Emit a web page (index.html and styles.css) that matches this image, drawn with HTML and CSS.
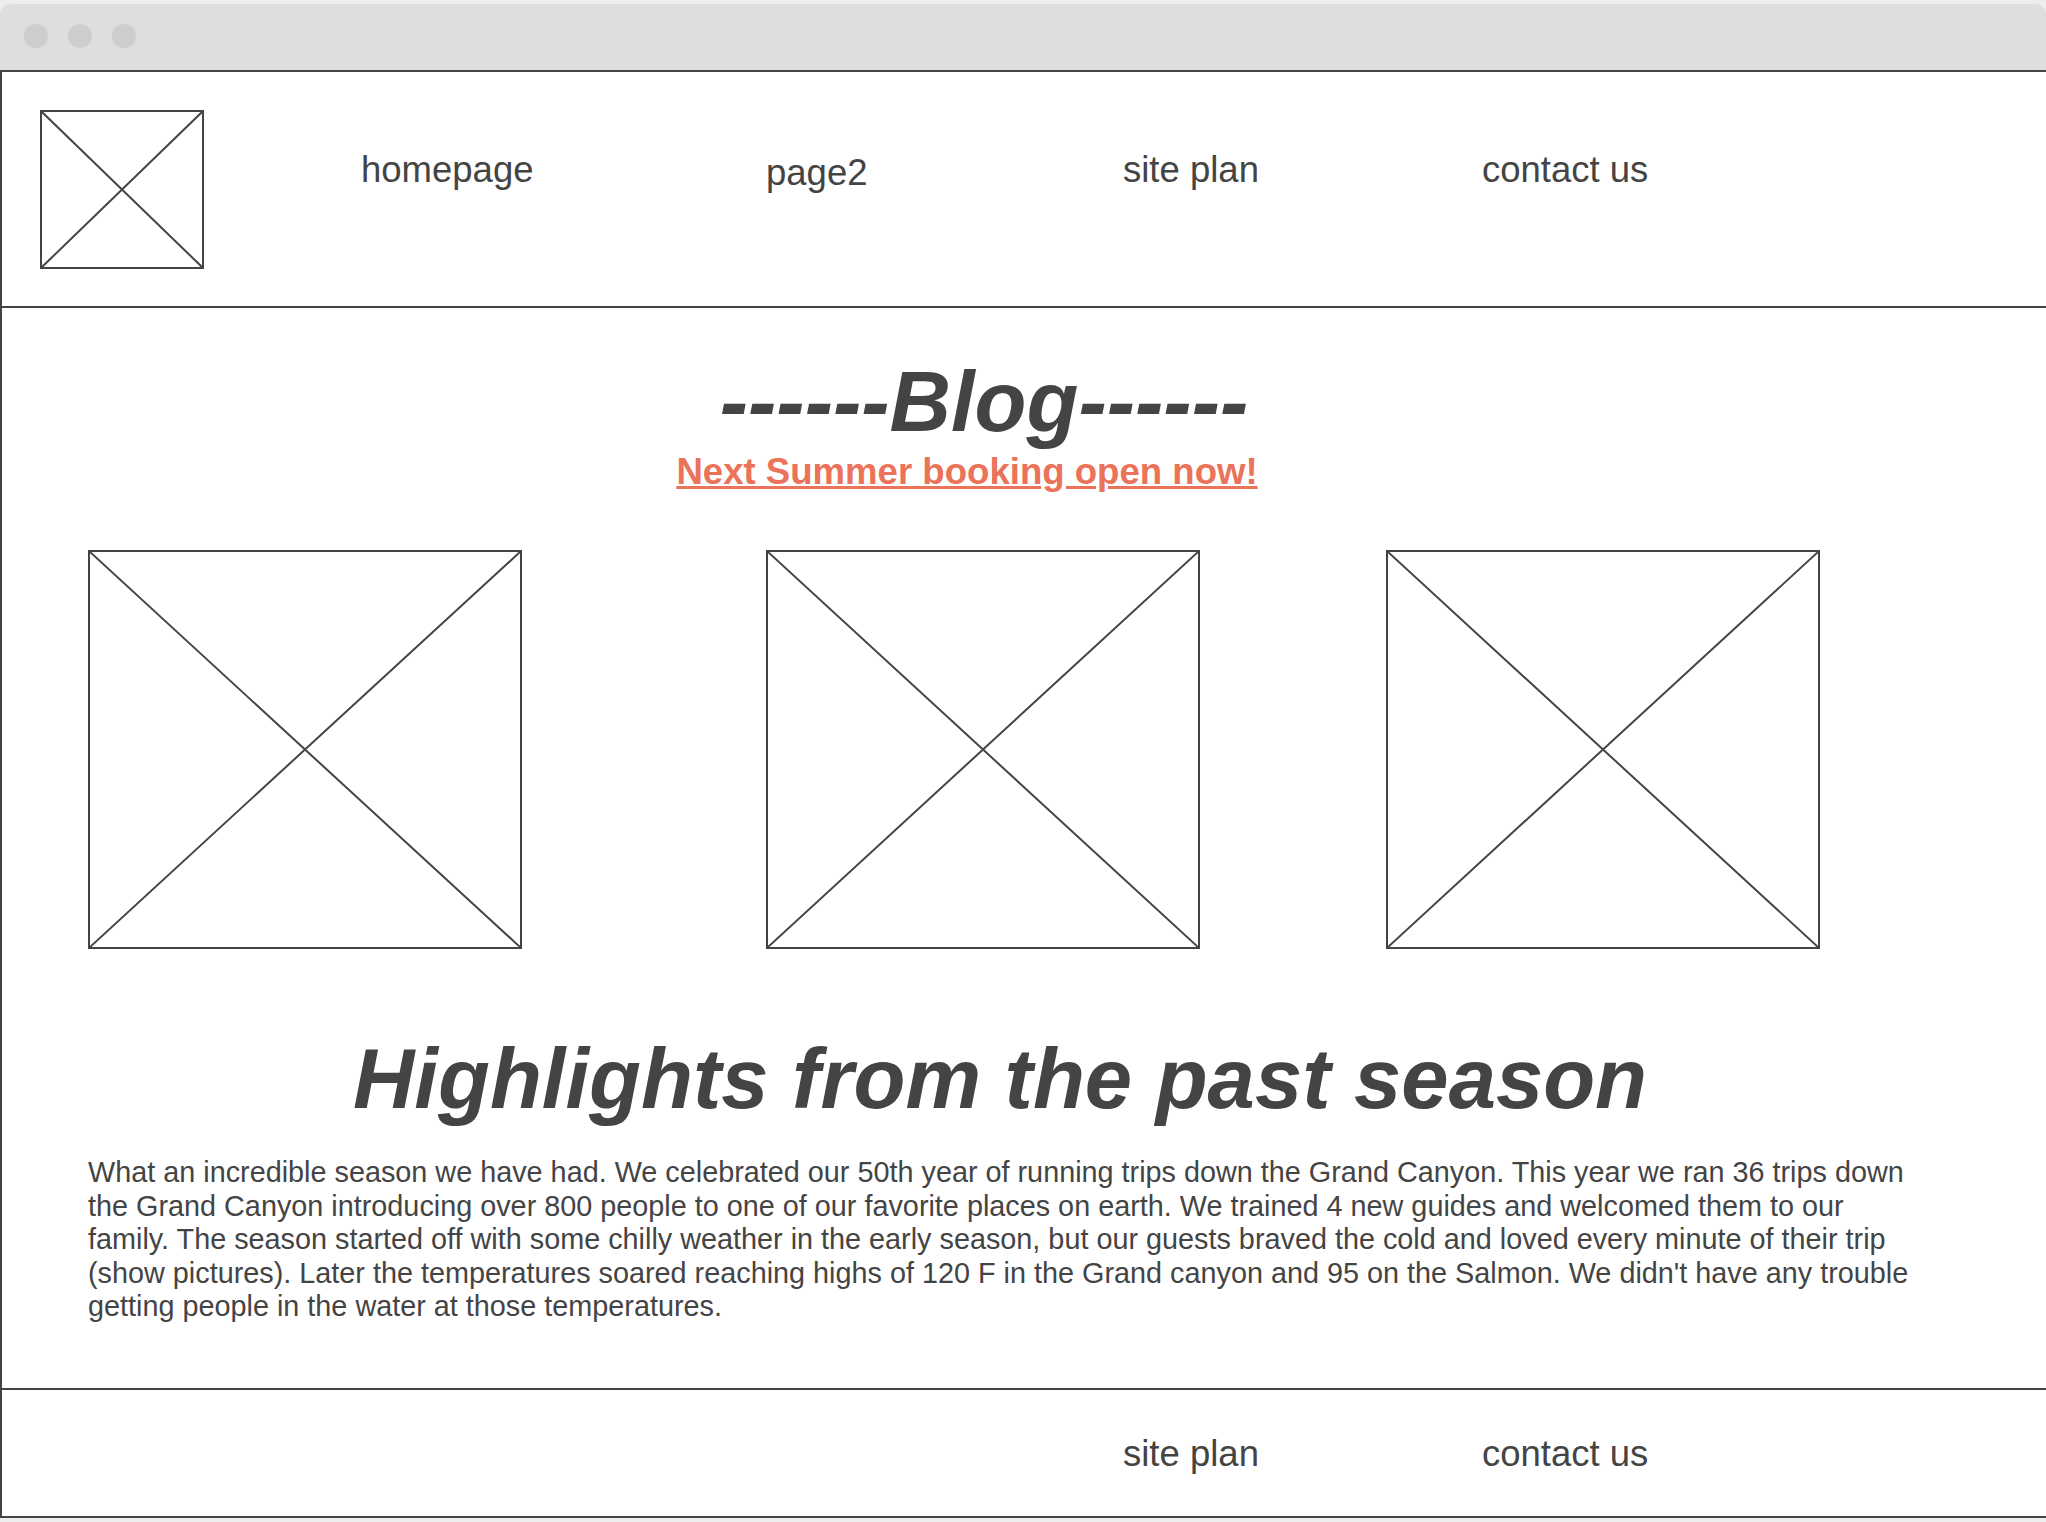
FILE: index.html
```html
<!DOCTYPE html>
<html lang="en">
<head>
    <meta charset="UTF-8">
    <meta name="viewport" content="width=device-width, initial-scale=1.0">
    <title>Blog</title>
    <link rel="stylesheet" href="styles.css">
</head>
<body>
    <div class="window">
        <!-- Browser chrome -->
        <div class="titlebar">
            <span class="dot"></span>
            <span class="dot"></span>
            <span class="dot"></span>
        </div>

        <div class="page">
            <header class="site-header">
                <div class="placeholder logo">
                    <svg viewBox="0 0 100 100" preserveAspectRatio="none">
                        <line x1="0" y1="0" x2="100" y2="100"></line>
                        <line x1="100" y1="0" x2="0" y2="100"></line>
                    </svg>
                </div>
                <nav class="nav">
                    <a class="nav-link" href="#">homepage</a>
                    <a class="nav-link low" href="#">page2</a>
                    <a class="nav-link" href="#">site plan</a>
                    <a class="nav-link" href="#">contact us</a>
                </nav>
            </header>

            <main class="content">
                <h1 class="blog-title">------Blog------</h1>
                <p class="booking"><a href="#">Next Summer booking open now!</a></p>

                <div class="gallery">
                    <div class="placeholder photo">
                        <svg viewBox="0 0 100 100" preserveAspectRatio="none">
                            <line x1="0" y1="0" x2="100" y2="100"></line>
                            <line x1="100" y1="0" x2="0" y2="100"></line>
                        </svg>
                    </div>
                    <div class="placeholder photo">
                        <svg viewBox="0 0 100 100" preserveAspectRatio="none">
                            <line x1="0" y1="0" x2="100" y2="100"></line>
                            <line x1="100" y1="0" x2="0" y2="100"></line>
                        </svg>
                    </div>
                    <div class="placeholder photo">
                        <svg viewBox="0 0 100 100" preserveAspectRatio="none">
                            <line x1="0" y1="0" x2="100" y2="100"></line>
                            <line x1="100" y1="0" x2="0" y2="100"></line>
                        </svg>
                    </div>
                </div>

                <h2 class="highlights">Highlights from the past season</h2>
                <p class="story">What an incredible season we have had. We celebrated our 50th year of running trips down the Grand Canyon. This year we ran 36 trips down the Grand Canyon introducing over 800 people to one of our favorite places on earth. We trained 4 new guides and welcomed them to our family. The season started off with some chilly weather in the early season, but our guests braved the cold and loved every minute of their trip (show pictures). Later the temperatures soared reaching highs of 120 F in the Grand canyon and 95 on the Salmon. We didn't have any trouble getting people in the water at those temperatures.</p>
            </main>

            <footer class="site-footer">
                <a class="nav-link" href="#">site plan</a>
                <a class="nav-link" href="#">contact us</a>
            </footer>
        </div>
    </div>
</body>
</html>
```

FILE: styles.css
```css
body {
    margin: 0;
    padding: 0;
    background-color: #ededed;
    font-family: "Liberation Sans", Arial, sans-serif;
    color: #444;
}

.window {
    margin-top: 4px;
    width: 2046px;
}

.titlebar {
    height: 68px;
    box-sizing: border-box;
    padding: 20px 0 0 24px;
    display: flex;
    gap: 20px;
    background-color: #dedede;
    border-radius: 10px 10px 0 0;
    border-bottom: 2px solid #444;
}

.dot {
    width: 24px;
    height: 24px;
    border-radius: 50%;
    background-color: #cdcdcd;
}

.page {
    background-color: #fff;
    border-left: 2px solid #444;
    border-bottom: 2px solid #444;
}

/* Header */
.site-header {
    display: flex;
    align-items: flex-start;
    padding: 38px 0 37px 38px;
    border-bottom: 2px solid #444;
}

.placeholder {
    box-sizing: border-box;
    border: 2px solid #444;
    background-color: #fff;
}

.placeholder svg {
    display: block;
    width: 100%;
    height: 100%;
}

.placeholder line {
    stroke: #444;
    stroke-width: 2;
    vector-effect: non-scaling-stroke;
}

.logo {
    width: 164px;
    height: 159px;
}

.nav {
    display: grid;
    grid-template-columns: 405px 357px 359px auto;
    margin-left: 157px;
    margin-top: 38px;
}

.nav-link {
    font-size: 36.5px;
    line-height: 1.2;
    color: #444;
    text-decoration: none;
}

.nav-link.low {
    padding-top: 3px;
}

/* Main content */
.content {
    padding: 51px 130px 64px 86px;
}

.blog-title {
    margin: 0;
    padding-right: 36px;
    font-size: 85px;
    line-height: 1;
    font-style: italic;
    font-weight: bold;
    text-align: center;
    color: #444;
}

.booking {
    margin: 6px 0 0;
    padding-right: 70px;
    font-size: 36.6px;
    line-height: 1.2;
    font-weight: bold;
    text-align: center;
}

.booking a {
    color: #eb7359;
}

.gallery {
    display: grid;
    grid-template-columns: 678px 620px 434px;
    margin-top: 56px;
}

.photo {
    width: 434px;
    height: 399px;
}

.highlights {
    margin: 87px 0 0;
    padding-right: 4px;
    font-size: 85px;
    line-height: 1;
    font-style: italic;
    font-weight: bold;
    text-align: center;
    color: #444;
}

.story {
    margin: 35px 0 0;
    font-size: 28.8px;
    line-height: 33.6px;
    color: #444;
}

/* Footer */
.site-footer {
    display: grid;
    grid-template-columns: 359px auto;
    height: 128px;
    box-sizing: border-box;
    padding: 42px 0 0 1121px;
    border-top: 2px solid #444;
}
```
